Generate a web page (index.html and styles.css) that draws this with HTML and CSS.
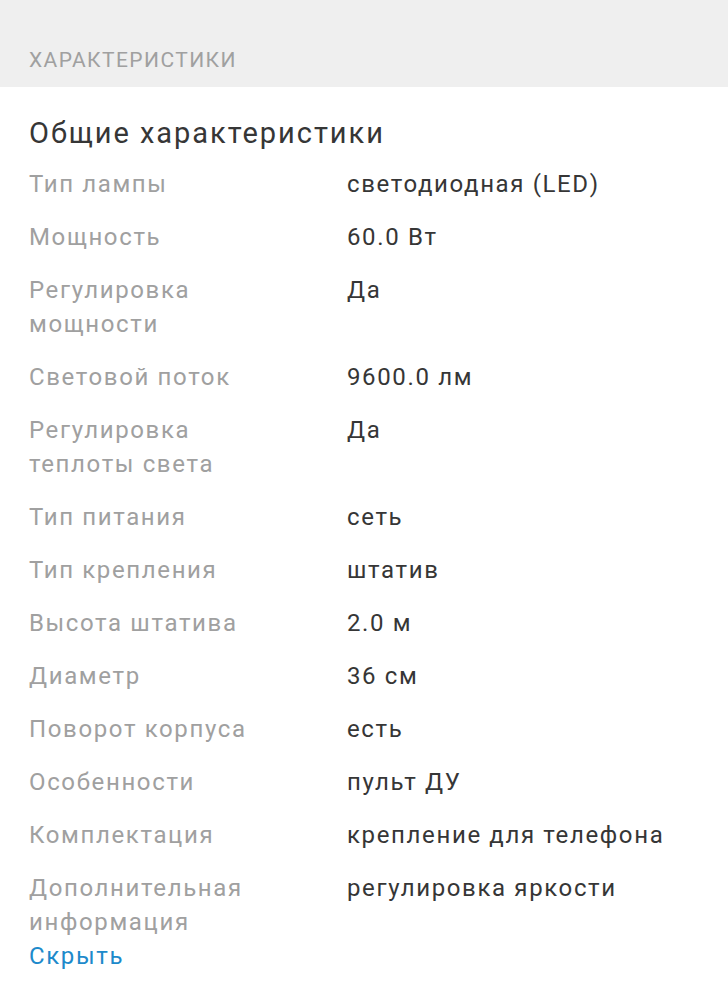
FILE: index.html
```html
<!DOCTYPE html>
<html lang="ru">
<head>
<meta charset="utf-8">
<link rel="stylesheet" href="styles.css">
</head>
<body>
<div class="section-head">ХАРАКТЕРИСТИКИ</div>
<div class="content">
  <h2 class="group-title">Общие характеристики</h2>
  <div class="specs">
    <div class="row"><div class="label">Тип лампы</div><div class="value">светодиодная (LED)</div></div>
    <div class="row"><div class="label">Мощность</div><div class="value">60.0 Вт</div></div>
    <div class="row"><div class="label">Регулировка мощности</div><div class="value">Да</div></div>
    <div class="row"><div class="label">Световой поток</div><div class="value">9600.0 лм</div></div>
    <div class="row"><div class="label">Регулировка теплоты света</div><div class="value">Да</div></div>
    <div class="row"><div class="label">Тип питания</div><div class="value">сеть</div></div>
    <div class="row"><div class="label">Тип крепления</div><div class="value">штатив</div></div>
    <div class="row"><div class="label">Высота штатива</div><div class="value">2.0 м</div></div>
    <div class="row"><div class="label">Диаметр</div><div class="value">36 см</div></div>
    <div class="row"><div class="label">Поворот корпуса</div><div class="value">есть</div></div>
    <div class="row"><div class="label">Особенности</div><div class="value">пульт ДУ</div></div>
    <div class="row"><div class="label">Комплектация</div><div class="value">крепление для телефона</div></div>
    <div class="row"><div class="label">Дополнительная информация</div><div class="value">регулировка яркости</div></div>
  </div>
  <a class="toggle" href="#">Скрыть</a>
</div>
</body>
</html>
```
FILE: styles.css
```css
html, body {
  margin: 0;
  padding: 0;
  background: #ffffff;
  font-family: Roboto, "Noto Sans", sans-serif;
}
.section-head {
  background: #efefef;
  color: #a0a0a0;
  font-size: 21px;
  line-height: 24px;
  letter-spacing: 0.068em;
  padding: 48px 29px 15px;
}
.content {
  padding: 0 29px;
}
.group-title {
  margin: 28px 0 16px;
  font-size: 29px;
  line-height: 36px;
  letter-spacing: 0.068em;
  font-weight: 400;
  color: #363636;
}
.specs {
  display: flex;
  flex-direction: column;
  gap: 19px;
}
.row {
  display: grid;
  grid-template-columns: 260px 1fr;
  column-gap: 58px;
  font-size: 24px;
  line-height: 34px;
  letter-spacing: 0.068em;
}
.label {
  color: #a0a0a0;
}
.value {
  color: #363636;
}
.toggle {
  display: block;
  font-size: 24px;
  line-height: 34px;
  letter-spacing: 0.068em;
  color: #1d8acb;
  text-decoration: none;
}
```
